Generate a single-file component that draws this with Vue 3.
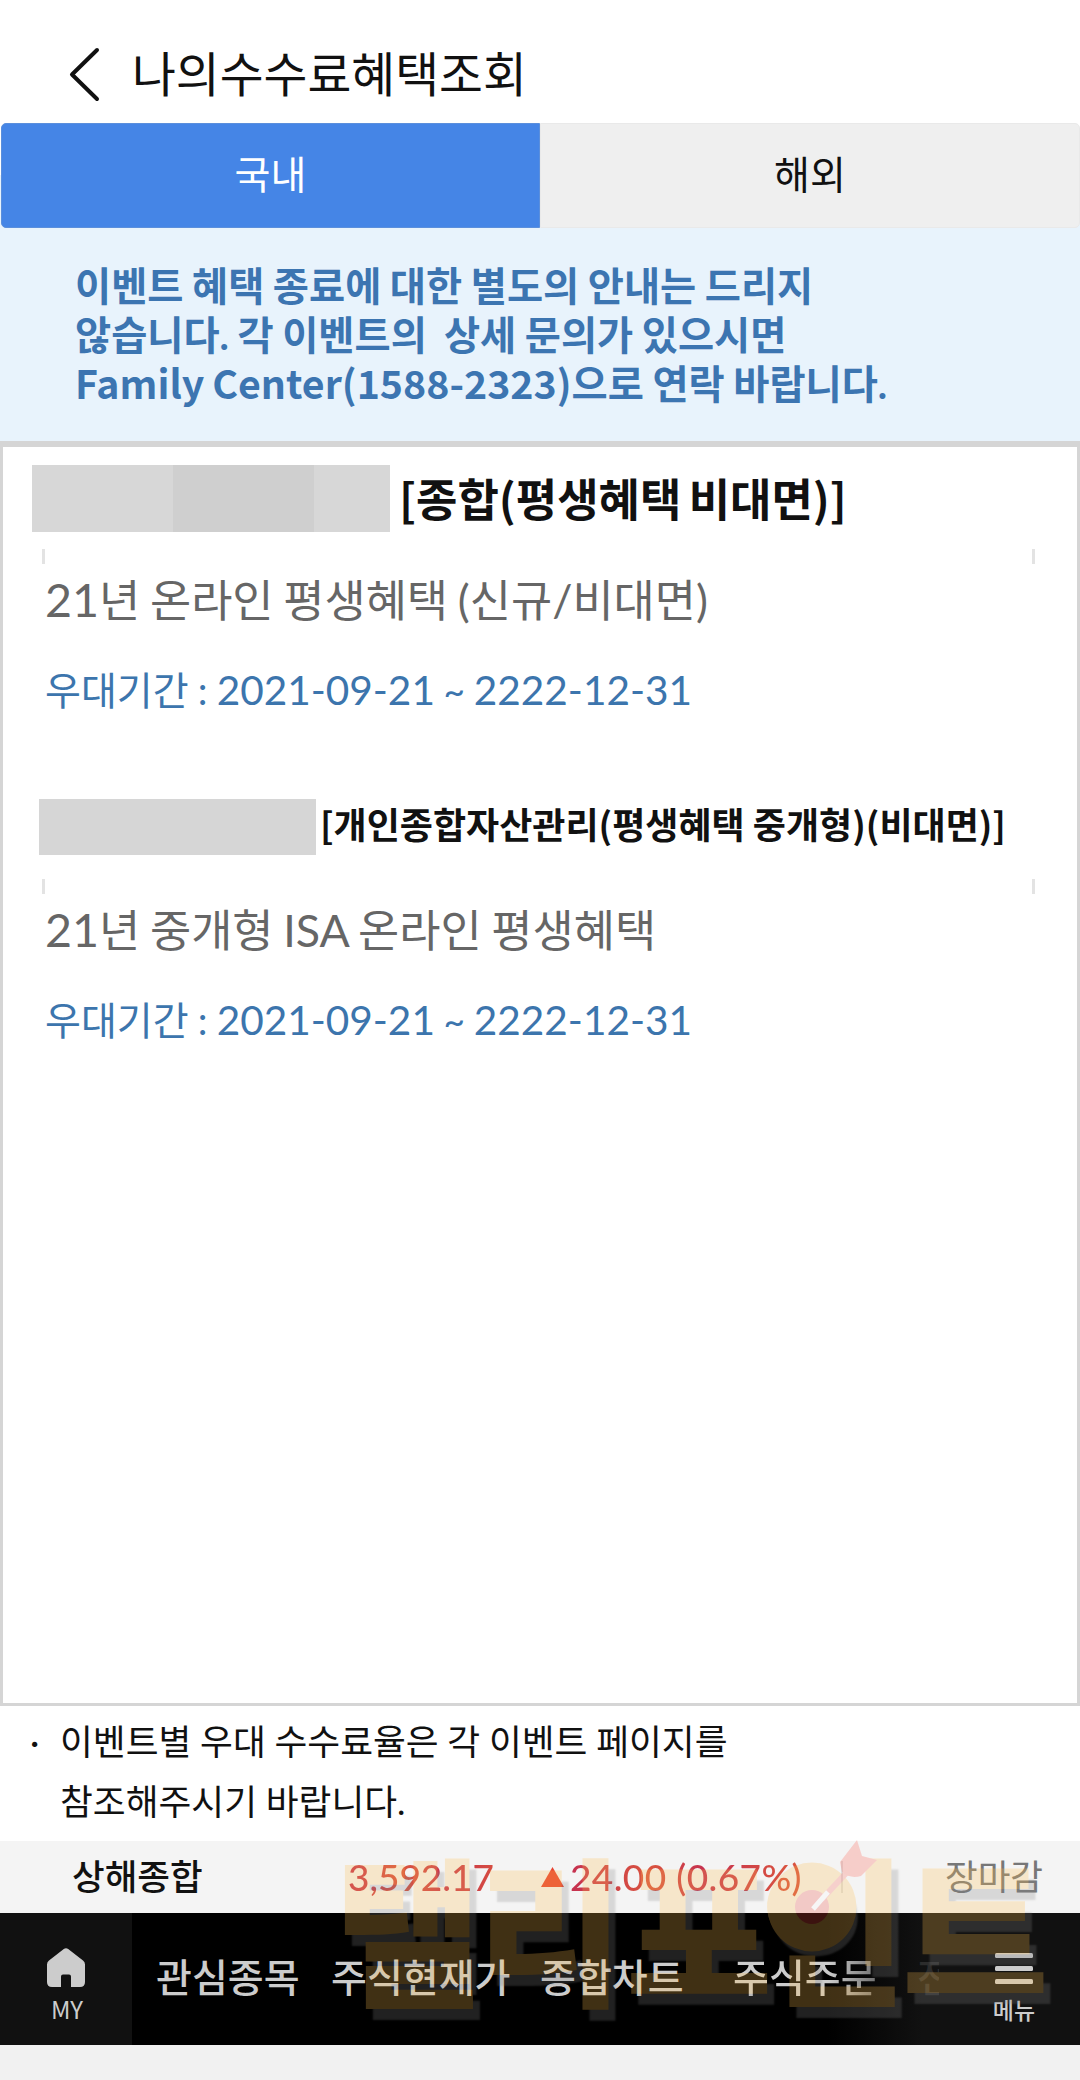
<script setup>
const benefits = [
  {
    id: 'general',
    account: '[종합(평생혜택 비대면)]',
    event: [
      { t: '21', en: true },
      { t: '년 온라인 평생혜택 (신규/비대면)' },
    ],
    from: '2021-09-21',
    to: '2222-12-31',
  },
  {
    id: 'isa',
    account: '[개인종합자산관리(평생혜택 중개형)(비대면)]',
    event: [
      { t: '21', en: true },
      { t: '년 중개형 ' },
      { t: 'ISA' },
      { t: ' 온라인 평생혜택' },
    ],
    from: '2021-09-21',
    to: '2222-12-31',
  },
]
</script>

<template>
  <div class="screen">
    <header class="header">
      <svg class="back" width="32" height="56" viewBox="0 0 32 56">
        <path d="M29 4 L4 28.500 L29 53" fill="none" stroke="#111" stroke-width="4" stroke-linecap="round" stroke-linejoin="round" />
      </svg>
      <h1 class="title">나의수수료혜택조회</h1>
    </header>

    <nav class="tabs">
      <div class="tab active">국내</div>
      <div class="tab">해외</div>
    </nav>

    <section class="notice">
      <p>이벤트 혜택 종료에 대한 별도의 안내는 드리지</p>
      <p>않습니다. 각 이벤트의&nbsp; 상세 문의가 있으시면</p>
      <p><span class="latin">Family Center(1588-2323)</span>으로 연락 바랍니다.</p>
    </section>

    <main class="list">
      <article v-for="b in benefits" :key="b.id" class="item" :class="b.id">
        <div class="account">
          <span class="mask"></span>
          <strong>{{ b.account }}</strong>
        </div>
        <div class="ticks"><i></i><i></i></div>
        <p class="event"><span v-for="(s, i) in b.event" :key="i" :class="{ en: s.en }">{{ s.t }}</span></p>
        <p class="period">우대기간 : <span class="en">{{ b.from }}</span><span class="tilde"> ~ </span><span class="en">{{ b.to }}</span></p>
      </article>
    </main>

    <section class="foot">
      <span class="dot">·</span>
      <div>
        <p>이벤트별 우대 수수료율은 각 이벤트 페이지를</p>
        <p>참조해주시기 바랍니다.</p>
      </div>
    </section>

    <section class="ticker">
      <span class="index">상해종합</span>
      <span class="price">3,592.17</span>
      <svg class="up" width="23" height="20" viewBox="0 0 23 20"><path d="M11.500 0 L23 20 H0 Z" fill="#e8432f" /></svg>
      <span class="change">24.00 (0.67%)</span>
      <span class="rule"></span>
      <span class="state">장마감</span>
    </section>

    <nav class="bottom">
      <div class="my">
        <svg width="38" height="39" viewBox="0 0 38 39">
          <path d="M16.800 .9 Q19 -.6 21.200 .9 L36 12.500 Q38 14 38 16.500 V34 Q38 39 33 39 H24 V28.500 Q24 26.500 22 26.500 H16 Q14 26.500 14 28.500 V39 H5 Q0 39 0 34 V16.500 Q0 14 2 12.500 Z" fill="#ccc" />
        </svg>
        <span>MY</span>
      </div>
      <div class="menu">
        <span class="m1">관심종목</span>
        <span class="m2">주식현재가</span>
        <span class="m3">종합차트</span>
        <span class="m4">주식주문</span>
        <span class="m5">전</span>
      </div>
      <div class="all">
        <svg width="38" height="32" viewBox="0 0 38 32">
          <g fill="#ccc"><rect width="38" height="5" rx="1.500" /><rect y="13" width="38" height="5" rx="1.500" /><rect y="26" width="38" height="5" rx="1.500" /></g>
        </svg>
        <span>메뉴</span>
      </div>
    </nav>

    <div class="watermark">
      <span class="brand">탤리<b>포</b>인트</span>
      <svg class="target" width="130" height="130" viewBox="0 0 130 130">
        <circle cx="52" cy="74" r="44.500" fill="#ffbf50" />
        <circle cx="52" cy="74" r="17" fill="#ef4b41" />
        <path d="M62 66 L90 36" stroke="#ff6a5a" stroke-width="6" />
        <path d="M53 76 L68 59" stroke="#fff" stroke-width="5" />
        <path d="M80 29 L97 7 L102 23 L117 27 L101 43 Q90 46 82 39 Z" fill="#ff5b4d" />
      </svg>
    </div>
  </div>
</template>

<style>
body {
  margin: 0;
  background: #f1f1f1;
}
</style>

<style scoped>
.screen {
  position: relative;
  width: 1080px;
  height: 2080px;
  overflow: hidden;
  background: #f1f1f1;
  color: #111;
  font-family: Lato, "Noto Sans CJK KR", sans-serif;
}
p,
h1 {
  margin: 0;
  font-weight: inherit;
  white-space: nowrap;
}
.en {
  font-size: 1.04em;
}
.latin {
  font-family: "Noto Sans CJK KR", sans-serif;
  line-height: 1;
}
.header {
  display: flex;
  align-items: flex-start;
  height: 123px;
  background: #fff;
}
.back {
  margin: 46px 0 0 68px;
}
.title {
  margin: 44px 0 0 32px;
  font-size: 47.7px;
  font-weight: 400;
  line-height: 60px;
}
.tabs {
  display: flex;
  height: 105px;
  background: linear-gradient(#fff 50%, #e8f3fc 50%);
}
.tab {
  flex: 1;
  box-sizing: border-box;
  text-align: center;
  font-size: 39px;
  line-height: 101px;
  border: 1px solid #e9e9e9;
  border-radius: 0 5px 5px 0;
  background: #efefef;
}
.tab.active {
  margin-left: 1px;
  flex: 0 0 539px;
  border-color: #5b8fdc;
  border-radius: 5px 0 0 5px;
  background: #4585e6;
  color: #fff;
}
.notice {
  box-sizing: border-box;
  height: 213px;
  padding: 33px 0 0 75px;
  background: #e8f3fc;
  color: #3c75b1;
  font-size: 39.3px;
  font-weight: 700;
  line-height: 49px;
  word-spacing: -1px;
}
.notice p {
  height: 49px;
}
.list {
  box-sizing: border-box;
  height: 1265px;
  border: 3px solid #d5d5d5;
  border-top-width: 6px;
  background: #fff;
}
.item {
  height: 330px;
}
.account {
  display: flex;
  height: 102px;
  align-items: flex-start;
}
.account strong {
  white-space: nowrap;
  font-family: "Noto Sans CJK KR", sans-serif;
}
.general .mask {
  width: 358px;
  height: 67px;
  margin: 18px 9px 0 29px;
  background: linear-gradient(90deg, #d7d7d7 141px, #cfcfcf 141px 282px, #d7d7d7 282px);
}
.general strong {
  margin-top: 21px;
  font-size: 45px;
  line-height: 60px;
  word-spacing: -3px;
}
.isa .mask {
  width: 277px;
  height: 56px;
  margin: 22px 4px 0 36px;
  background: #d6d6d6;
}
.isa strong {
  margin-top: 16px;
  font-size: 36px;
  line-height: 60px;
}
.ticks {
  display: flex;
  justify-content: space-between;
  height: 15px;
  padding: 0 42px 0 39px;
}
.ticks i {
  width: 3px;
  background: #e3e3e3;
}
.event {
  height: 60px;
  margin: 5px 0 0 42px;
  color: #666;
  font-size: 44.8px;
  line-height: 60px;
  word-spacing: -1.8px;
}
.period {
  height: 60px;
  margin: 31px 0 0 42px;
  color: #3c75ad;
  font-size: 39px;
  line-height: 60px;
  word-spacing: -0.8px;
}
.tilde {
  font-size: 0.95em;
}
.foot {
  display: flex;
  box-sizing: border-box;
  height: 135px;
  padding: 6px 0 0 30px;
  background: #fff;
  font-size: 35.7px;
  line-height: 60px;
  word-spacing: -0.4px;
}
.dot {
  width: 30px;
}
.ticker {
  display: flex;
  align-items: center;
  height: 72px;
  background: #f4f4f4;
  font-size: 35.5px;
  line-height: 72px;
  white-space: nowrap;
}
.index {
  width: 276px;
  margin-left: 72px;
  font-weight: 500;
}
.price,
.change {
  color: #c5304f;
  font-size: 37px;
  font-weight: 500;
  background: linear-gradient(90deg, #c5304f, #d9533f 30%, #c5304f 50%, #d9533f 80%);
  background-clip: text;
  -webkit-text-fill-color: transparent;
}
.price {
  width: 193px;
}
.up {
  margin-right: 6px;
}
.change {
  width: 271px;
  letter-spacing: 0.4px;
}
.rule {
  width: 2px;
  height: 32px;
  background: #dedede;
}
.state {
  margin-left: 102px;
  color: #777;
}
.bottom {
  display: flex;
  height: 132px;
  background: #000;
  color: #ccc;
}
.my,
.all {
  display: flex;
  flex-direction: column;
  align-items: center;
  box-sizing: border-box;
  width: 132px;
  padding-top: 35px;
  background: #111;
}
.my span {
  margin-top: 7px;
  padding-left: 2px;
  font-size: 24px;
  line-height: 30px;
  font-family: "Noto Sans CJK KR", sans-serif;
}
.menu {
  flex: 1;
  display: flex;
  padding-left: 24px;
  font-size: 39px;
  font-weight: 500;
  line-height: 128px;
  white-space: nowrap;
  background: linear-gradient(90deg, #000 695px, #111 790px);
}
.m1 {
  width: 175px;
}
.m2 {
  width: 209px;
}
.m3 {
  width: 193px;
}
.m4 {
  width: 184px;
  background: linear-gradient(90deg, #ccc 95px, #666 150px);
  background-clip: text;
  -webkit-text-fill-color: transparent;
}
.m5 {
  width: 22px;
  overflow: hidden;
  color: #2c2c2c;
}
.all {
  width: 132px;
  padding-top: 40px;
}
.all svg {
  flex: none;
}
.all span {
  margin-top: 8px;
  font-size: 23px;
  line-height: 34px;
  font-weight: 500;
}
.watermark {
  position: absolute;
  left: 335px;
  top: 1833px;
  width: 745px;
  height: 200px;
  opacity: 0.25;
}
.brand {
  position: absolute;
  left: 0;
  top: -9px;
  color: #ffbf50;
  font-family: "Noto Sans CJK KR", sans-serif;
  font-size: 160px;
  font-weight: 900;
  letter-spacing: -5.5px;
  line-height: 200px;
  white-space: nowrap;
  text-shadow: 7px 11px 2px #848484;
}
.brand b {
  margin: 0 -7px 0 7px;
  font-weight: 900;
}
.target {
  position: absolute;
  left: 425px;
  top: 0;
}
</style>
